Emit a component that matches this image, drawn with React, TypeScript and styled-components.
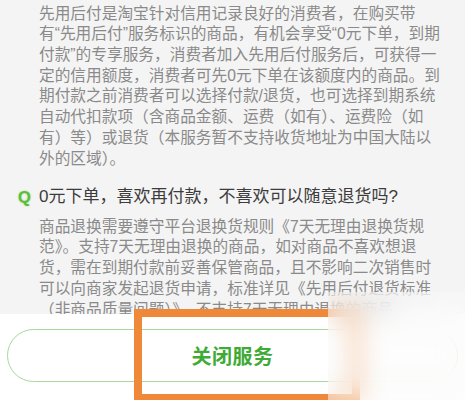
import React from "react";
import styled, { createGlobalStyle } from "styled-components";

const Global = createGlobalStyle`
  html, body { margin: 0; padding: 0; }
  body { font-family: "Liberation Sans", "Noto Sans CJK SC", sans-serif; }
`;

const Page = styled.div`
  position: relative;
  width: 465px;
  height: 400px;
  overflow: hidden;
  background: #f4f4f4;
`;

const Content = styled.div`
  padding: 3.6px 4px 0 39px;
`;

const Paragraph = styled.p<{ $gap?: number }>`
  margin: ${(p) => p.$gap ?? 0}px 0 0;
  font-size: 15.7px;
  line-height: 20.7px;
  color: #8a8a8a;
  white-space: nowrap;
`;

const Question = styled.div`
  display: flex;
  align-items: center;
  margin: 15.8px 0 0 -21px;
  height: 24px;
`;

const QMark = styled.span`
  width: 21px;
  font-size: 16.5px;
  font-weight: 700;
  color: #5cbc3c;
  text-shadow: 0 0 2px rgba(110, 210, 80, 0.7);
  line-height: 24px;
`;

const QText = styled.span`
  font-size: 17px;
  color: #3c3c3c;
  line-height: 24px;
  white-space: nowrap;
`;

const Footer = styled.div`
  position: absolute;
  left: 0;
  right: 0;
  bottom: 0;
  height: 86px;
  background: #ffffff;
  display: flex;
  padding: 15px 7px 0;
  box-sizing: border-box;
`;

const CloseButton = styled.button`
  flex: 1;
  height: 53px;
  border: 1px solid #a8d89c;
  border-radius: 27px;
  background: #ffffff;
  color: #3faa35;
  font-family: "Noto Sans CJK SC", sans-serif;
  font-size: 20px;
  font-weight: 700;
  letter-spacing: 0.5px;
  display: flex;
  align-items: center;
  justify-content: center;
  cursor: pointer;
`;

const Highlight = styled.div`
  position: absolute;
  left: 134px;
  top: 309px;
  width: 226px;
  height: 93px;
  border: 8px solid #f0883a;
  box-sizing: border-box;
  pointer-events: none;
`;

const BlurPatch = styled.div`
  position: absolute;
  left: 328px;
  top: 292px;
  width: 137px;
  height: 108px;
  backdrop-filter: blur(12px);
  background: rgba(250, 250, 250, 0.45);
  pointer-events: none;
`;

const para1 = [
  "先用后付是淘宝针对信用记录良好的消费者，在购买带",
  "有“先用后付”服务标识的商品，有机会享受“0元下单，到期",
  "付款”的专享服务，消费者加入先用后付服务后，可获得一",
  "定的信用额度，消费者可先0元下单在该额度内的商品。到",
  "期付款之前消费者可以选择付款/退货，也可选择到期系统",
  "自动代扣款项（含商品金额、运费（如有）、运费险（如",
  "有）等）或退货（本服务暂不支持收货地址为中国大陆以",
  "外的区域）。",
];

const para2 = [
  "商品退换需要遵守平台退换货规则《7天无理由退换货规",
  "范》。支持7天无理由退换的商品，如对商品不喜欢想退",
  "货，需在到期付款前妥善保管商品，且不影响二次销售时",
  "可以向商家发起退货申请，标准详见《先用后付退货标准",
  "（非商品质量问题）》，不支持7天无理由退换的商品",
];

const Lines: React.FC<{ lines: string[] }> = ({ lines }) => (
  <>
    {lines.map((l, i) => (
      <React.Fragment key={i}>
        {l}
        {i < lines.length - 1 && <br />}
      </React.Fragment>
    ))}
  </>
);

export default function App() {
  return (
    <Page>
      <Global />
      <Content>
        <Paragraph>
          <Lines lines={para1} />
        </Paragraph>
        <Question>
          <QMark>Q</QMark>
          <QText>0元下单，喜欢再付款，不喜欢可以随意退货吗?</QText>
        </Question>
        <Paragraph $gap={7.7}>
          <Lines lines={para2} />
        </Paragraph>
      </Content>
      <Footer>
        <CloseButton>关闭服务</CloseButton>
      </Footer>
      <Highlight />
      <BlurPatch />
    </Page>
  );
}
